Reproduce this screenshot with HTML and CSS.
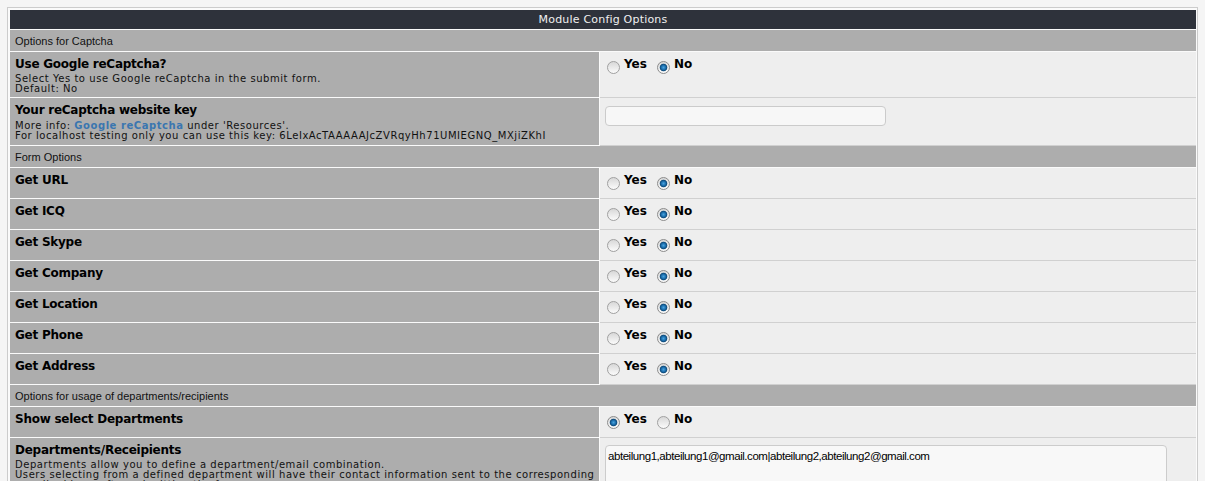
FILE: index.html
```html
<!DOCTYPE html>
<html lang="en">
<head>
<meta charset="utf-8">
<title>Module Config Options</title>
<link rel="stylesheet" href="styles.css">
</head>
<body>
<div class="panel">
  <div class="panel__head">Module Config Options</div>

  <div class="section">Options for Captcha</div>
  <div class="row">
    <div class="row__label">
      <div class="row__title">Use Google reCaptcha?</div>
      <div class="row__desc">Select Yes to use Google reCaptcha in the submit form.<br>Default: No</div>
    </div>
    <div class="row__value">
      <label class="opt"><input type="radio" class="radio" name="captcha">Yes</label><label class="opt"><input type="radio" class="radio" name="captcha" checked>No</label>
    </div>
  </div>
  <div class="row row--tall">
    <div class="row__label">
      <div class="row__title">Your reCaptcha website key</div>
      <div class="row__desc">More info: <a class="link" href="#">Google reCaptcha</a> under 'Resources'.<br>For localhost testing only you can use this key: 6LeIxAcTAAAAAJcZVRqyHh71UMIEGNQ_MXjiZKhI</div>
    </div>
    <div class="row__value">
      <input type="text" class="field">
    </div>
  </div>

  <div class="section">Form Options</div>
  <div class="row">
    <div class="row__label"><div class="row__title">Get URL</div></div>
    <div class="row__value"><label class="opt"><input type="radio" class="radio" name="url">Yes</label><label class="opt"><input type="radio" class="radio" name="url" checked>No</label></div>
  </div>
  <div class="row">
    <div class="row__label"><div class="row__title">Get ICQ</div></div>
    <div class="row__value"><label class="opt"><input type="radio" class="radio" name="icq">Yes</label><label class="opt"><input type="radio" class="radio" name="icq" checked>No</label></div>
  </div>
  <div class="row">
    <div class="row__label"><div class="row__title">Get Skype</div></div>
    <div class="row__value"><label class="opt"><input type="radio" class="radio" name="skype">Yes</label><label class="opt"><input type="radio" class="radio" name="skype" checked>No</label></div>
  </div>
  <div class="row">
    <div class="row__label"><div class="row__title">Get Company</div></div>
    <div class="row__value"><label class="opt"><input type="radio" class="radio" name="company">Yes</label><label class="opt"><input type="radio" class="radio" name="company" checked>No</label></div>
  </div>
  <div class="row">
    <div class="row__label"><div class="row__title">Get Location</div></div>
    <div class="row__value"><label class="opt"><input type="radio" class="radio" name="location">Yes</label><label class="opt"><input type="radio" class="radio" name="location" checked>No</label></div>
  </div>
  <div class="row">
    <div class="row__label"><div class="row__title">Get Phone</div></div>
    <div class="row__value"><label class="opt"><input type="radio" class="radio" name="phone">Yes</label><label class="opt"><input type="radio" class="radio" name="phone" checked>No</label></div>
  </div>
  <div class="row">
    <div class="row__label"><div class="row__title">Get Address</div></div>
    <div class="row__value"><label class="opt"><input type="radio" class="radio" name="address">Yes</label><label class="opt"><input type="radio" class="radio" name="address" checked>No</label></div>
  </div>

  <div class="section">Options for usage of departments/recipients</div>
  <div class="row">
    <div class="row__label"><div class="row__title">Show select Departments</div></div>
    <div class="row__value"><label class="opt"><input type="radio" class="radio" name="depts" checked>Yes</label><label class="opt"><input type="radio" class="radio" name="depts">No</label></div>
  </div>
  <div class="row">
    <div class="row__label">
      <div class="row__title">Departments/Receipients</div>
      <div class="row__desc">Departments allow you to define a department/email combination.<br>Users selecting from a defined department will have their contact information sent to the corresponding<br>e-mail address after submitting the form.</div>
    </div>
    <div class="row__value">
      <textarea class="area">abteilung1,abteilung1@gmail.com|abteilung2,abteilung2@gmail.com</textarea>
    </div>
  </div>
</div>
</body>
</html>
```

FILE: styles.css
```css
html, body {
  margin: 0;
  background: #f5f5f5;
  overflow: hidden;
}

body {
  font-family: "DejaVu Sans", Verdana, sans-serif;
  color: #000;
}

.panel {
  margin: 7px 0 0 7px;
  width: 1186px;
  padding: 2px 1px 0 2px;
  border: 1px solid #cccccc;
  background: #fafafa;
}

.panel__head {
  background: #2e323b;
  color: #f0f0f0;
  font-size: 11px;
  line-height: 13px;
  letter-spacing: 0.2px;
  padding: 3px 5px;
  text-align: center;
  border-bottom: 1px solid #fafafa;
}

.section {
  background: #adadad;
  color: #111;
  font-family: "Liberation Sans", Arial, sans-serif;
  font-size: 11px;
  line-height: 13px;
  padding: 5px 5px 3px;
  border-bottom: 1px solid #fafafa;
}

.row {
  display: grid;
  grid-template-columns: 589px 1fr;
  column-gap: 1px;
  min-height: 31px;
}

.row__label {
  background: #adadad;
  padding: 5px 5px 3px;
  border-bottom: 1px solid #fafafa;
  overflow: hidden;
}

.row__title {
  font-size: 12px;
  line-height: 14px;
  font-weight: bold;
  letter-spacing: -0.25px;
}

.row__desc {
  margin-top: 3px;
  font-size: 10px;
  line-height: 10px;
  letter-spacing: 0.55px;
  white-space: nowrap;
  color: #111;
}

.row--tall .row__label {
  padding-bottom: 4px;
}

.row--tall .row__desc {
  margin-top: 4px;
}

.link {
  color: #3a76b0;
  font-weight: bold;
  text-decoration: none;
}

.row__value {
  background: #eeeeee;
  padding: 5px;
  border-bottom: 1px solid #d0d0d0;
  font-size: 12px;
  line-height: 14px;
  font-weight: bold;
}

.opt {
  margin-right: 8px;
}

.radio {
  appearance: none;
  -webkit-appearance: none;
  width: 13px;
  height: 13px;
  margin: 0 4px 0 2px;
  vertical-align: -6px;
  box-sizing: border-box;
  border-radius: 50%;
  border: 1px solid #a0a0a0;
  background: linear-gradient(#d8d8d8, #fbfbfb);
}

.radio:checked {
  border-color: #8c8c8c;
  background:
    radial-gradient(circle, #4aa3dc 0, #1f73b3 2px, #0d4a7a 3.4px, rgba(13, 74, 122, 0) 4.2px),
    linear-gradient(#d8d8d8, #fbfbfb);
}

.field {
  display: block;
  margin-top: 3px;
  width: 281px;
  height: 20px;
  box-sizing: border-box;
  border: 1px solid #cbcbcb;
  border-radius: 4px;
  background: #f7f7f7;
}

.area {
  display: block;
  margin-top: 2px;
  width: 562px;
  height: 80px;
  box-sizing: border-box;
  padding: 3px 2px;
  border: 1px solid #cccccc;
  border-radius: 4px;
  background: #f8f8f8;
  font-family: "Liberation Sans", Arial, sans-serif;
  font-size: 11.5px;
  line-height: 14px;
  letter-spacing: -0.45px;
  color: #000;
  resize: none;
}
```
